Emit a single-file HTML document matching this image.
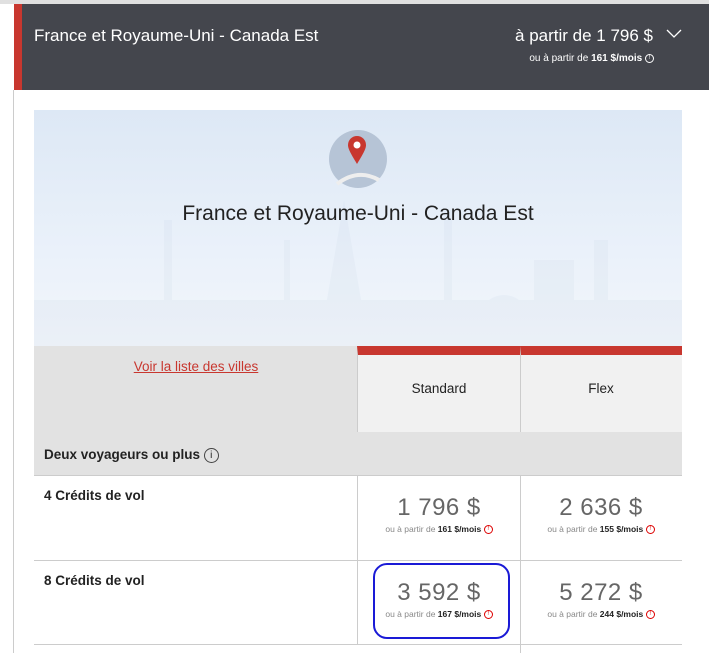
<!DOCTYPE html>
<html><head><meta charset="utf-8"><style>
*{margin:0;padding:0;box-sizing:border-box}
body{width:709px;height:653px;overflow:hidden;background:#fff;font-family:"Liberation Sans",sans-serif;position:relative}
.abs{position:absolute}
.hdr{left:14px;top:4px;width:695px;height:86px;background:#44464d;border-left:8px solid #c8372f}
.topstrip{left:0;top:0;width:709px;height:4px;background:#e0e0e0}
.lline{left:13px;top:90px;width:1px;height:563px;background:#ccc}
.hero{left:34px;top:110px;width:648px;height:236px;background:linear-gradient(#dde8f5,#eaf1fa 60%,#f2f6fb)}
.cell{position:absolute;border-right:1px solid #ccc;border-bottom:1px solid #ccc}
.price{font-size:24px;color:#666;text-align:center;letter-spacing:0.5px}
.sub{font-size:8.5px;color:#888;text-align:center}
.sub b{color:#222}
.ri{display:inline-block;width:9px;height:9px;border:1px solid #d00;border-radius:50%;font-size:6px;color:#d00;line-height:7px;text-align:center;vertical-align:middle}
.lbl{font-size:13.5px;font-weight:bold;color:#222}
</style></head><body>
<div class="abs topstrip"></div>
<div class="abs hdr"></div>
<div class="abs" style="left:34px;top:26px;color:#fff;font-size:17px">France et Royaume-Uni - Canada Est</div>
<div class="abs" style="right:56px;top:26px;color:#fff;font-size:17px">à partir de 1 796 $</div>
<svg class="abs" style="left:666px;top:29px" width="16" height="10"><path d="M1 1 L8 8 L15 1" stroke="#fff" fill="none" stroke-width="1.3"/></svg>
<div class="abs" style="right:55px;top:53px;color:#fff;font-size:10px">ou à partir de <b>161 $/mois</b> <span style="display:inline-block;width:9px;height:9px;border:1px solid #fff;border-radius:50%;font-size:6px;line-height:7px;text-align:center;vertical-align:middle">!</span></div>
<div class="abs lline"></div>
<div class="abs hero"></div>
<svg class="abs" style="left:34px;top:180px" width="648" height="166" opacity="0.15">
<g fill="#c5d3e6"><rect x="130" y="40" width="8" height="126"/><rect x="250" y="60" width="6" height="106"/><rect x="410" y="30" width="8" height="136"/><path d="M285 166 L310 20 L335 166Z"/><rect x="500" y="80" width="40" height="86"/><rect x="560" y="60" width="14" height="106"/><rect x="0" y="120" width="648" height="46"/><circle cx="470" cy="140" r="25"/></g></svg>
<div class="abs" style="left:329px;top:130px;width:58px;height:58px;border-radius:50%;background:#b6c4d6"></div>
<svg class="abs" style="left:347px;top:136px" width="20" height="30"><path d="M10 28 C4 18 1 13 1 9 A9 9 0 0 1 19 9 C19 13 16 18 10 28Z" fill="#c8372f"/><circle cx="10" cy="9" r="3.5" fill="#fff"/></svg>
<svg class="abs" style="left:335px;top:168px" width="46" height="18"><path d="M2 16 Q23 0 44 12" stroke="#eee" stroke-width="4" fill="none"/></svg>
<div class="abs" style="left:34px;width:648px;top:202px;text-align:center;font-size:21px;color:#222">France et Royaume-Uni - Canada Est</div>
<div class="cell" style="left:34px;top:346px;width:324px;height:87px;background:#e2e2e2;border-right:none"></div>
<div class="abs" style="left:34px;width:324px;top:359px;text-align:center;font-size:13.5px;color:#c8372f;text-decoration:underline">Voir la liste des villes</div>
<div class="cell" style="left:357px;top:346px;width:164px;height:87px;background:#f1f1f1;border-left:1px solid #ccc;border-top:9px solid #c8372f"></div>
<div class="cell" style="left:521px;top:346px;width:161px;height:87px;background:#f1f1f1;border-right:none;border-top:9px solid #c8372f"></div>
<div class="abs" style="left:357px;width:164px;top:381px;text-align:center;font-size:13.5px;color:#222">Standard</div>
<div class="abs" style="left:520px;width:162px;top:381px;text-align:center;font-size:13.5px;color:#222">Flex</div>
<div class="cell" style="left:34px;top:432px;width:648px;height:44px;background:#e2e2e2;border-right:none"></div>
<div class="abs lbl" style="left:44px;top:447px">Deux voyageurs ou plus <span style="display:inline-block;width:15px;height:15px;border:1px solid #444;border-radius:50%;font-size:10px;font-weight:normal;line-height:13px;text-align:center;vertical-align:middle">i</span></div>
<div class="cell" style="left:34px;top:475px;width:324px;height:86px;border-right:1px solid #ccc"></div>
<div class="cell" style="left:357px;top:475px;width:164px;height:86px"></div>
<div class="cell" style="left:520px;top:475px;width:162px;height:86px;border-right:none"></div>
<div class="cell" style="left:34px;top:560px;width:324px;height:85px"></div>
<div class="cell" style="left:357px;top:560px;width:164px;height:93px;border-bottom:none"></div>
<div class="cell" style="left:34px;top:644px;width:648px;height:1px;border:none;background:#ccc"></div>
<div class="abs lbl" style="left:44px;top:488px">4 Crédits de vol</div>
<div class="abs lbl" style="left:44px;top:573px">8 Crédits de vol</div>
<div class="abs" style="left:357px;width:164px;top:494px"><div class="price">1 796 $</div><div class="sub" style="margin-top:2px">ou à partir de <b>161 $/mois</b> <span class="ri">!</span></div></div>
<div class="abs" style="left:520px;width:162px;top:494px"><div class="price">2 636 $</div><div class="sub" style="margin-top:2px">ou à partir de <b>155 $/mois</b> <span class="ri">!</span></div></div>
<div class="abs" style="left:357px;width:164px;top:579px"><div class="price">3 592 $</div><div class="sub" style="margin-top:2px">ou à partir de <b>167 $/mois</b> <span class="ri">!</span></div></div>
<div class="abs" style="left:520px;width:162px;top:579px"><div class="price">5 272 $</div><div class="sub" style="margin-top:2px">ou à partir de <b>244 $/mois</b> <span class="ri">!</span></div></div>
<div class="abs" style="left:373px;top:563px;width:137px;height:76px;border:2px solid #1a1ad6;border-radius:14px"></div>
</body></html>
